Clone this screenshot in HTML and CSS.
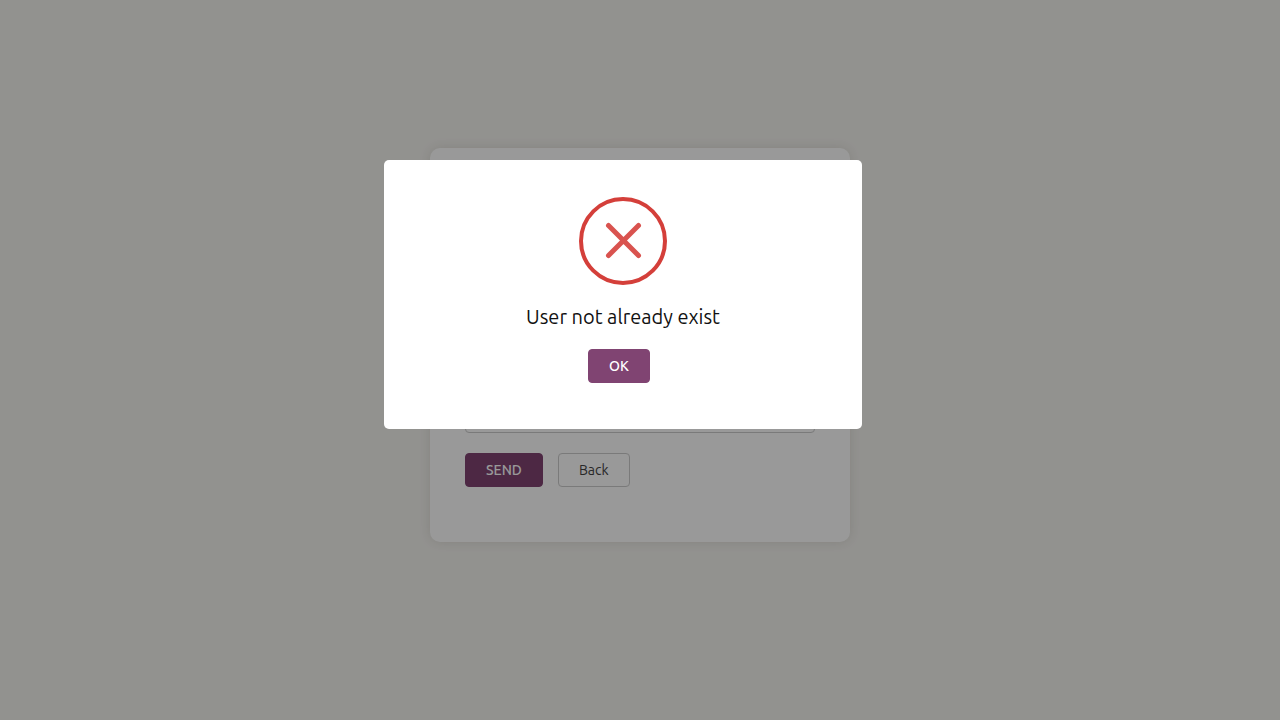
FILE: index.html
```html
<!DOCTYPE html>
<html lang="en">
<head>
<meta charset="utf-8">
<meta name="viewport" content="width=device-width, initial-scale=1">
<title>User not already exist</title>
<link rel="stylesheet" href="styles.css">
</head>
<body>
<main class="page">
  <form class="card">
    <input class="field" type="text" aria-label="User">
    <div class="actions">
      <button class="btn btn-primary" type="button">SEND</button>
      <button class="btn btn-outline" type="button">Back</button>
    </div>
  </form>
</main>
<div class="overlay">
  <div class="modal" role="alertdialog" aria-modal="true" aria-labelledby="message">
    <svg class="icon" viewBox="0 0 88 88" fill="none" aria-hidden="true">
      <circle cx="44" cy="44" r="42" stroke="#d43f3a" stroke-width="4"/>
      <path d="M29.500 28.500L59.500 58.500M59.500 28.500L29.500 58.500" stroke="#d9534f" stroke-width="5" stroke-linecap="round"/>
    </svg>
    <h1 class="message" id="message">User not already exist</h1>
    <button class="btn btn-primary btn-ok" type="button">OK</button>
  </div>
</div>
</body>
</html>
```
FILE: styles.css
```css
* {
  box-sizing: border-box;
}

body {
  margin: 0;
  background: #f4f3ef;
  color: #111;
  font-family: Ubuntu, "Noto Sans", sans-serif;
  font-size: 14px;
}

.page {
  display: flex;
  align-items: center;
  justify-content: center;
  min-height: 100vh;
  padding-bottom: 30px;
}

.card {
  display: flex;
  flex-direction: column;
  justify-content: flex-end;
  gap: 20px;
  width: 100%;
  max-width: 420px;
  min-height: 394px;
  padding: 35px 35px 55px;
  border-radius: 10px;
  background: #fff;
  box-shadow: 0 0 12px rgba(60, 50, 30, 0.12);
}

.field {
  width: 100%;
  height: 34px;
  padding: 0 12px;
  border: 1px solid #ccc;
  border-radius: 4px;
  background: #fff;
  font: inherit;
}

.actions {
  display: flex;
  gap: 15px;
}

.btn {
  height: 34px;
  padding: 0 20px;
  border: 1px solid transparent;
  border-radius: 4px;
  font: inherit;
  line-height: 20px;
}

.btn-primary {
  border-color: #804472;
  background: #804472;
  color: #fff;
  font-weight: 500;
}

.btn-outline {
  border-color: #ccc;
  background: #fff;
  color: #444;
}

.overlay {
  position: fixed;
  inset: 0;
  display: flex;
  align-items: flex-start;
  justify-content: center;
  padding: 160px 34px 0 0;
  background: rgba(0, 0, 0, 0.4);
}

.modal {
  display: flex;
  flex-direction: column;
  align-items: center;
  width: 100%;
  max-width: 478px;
  padding: 37px 20px 46px;
  border-radius: 5px;
  background: #fff;
}

.icon {
  width: 88px;
  height: 88px;
}

.message {
  margin: 18px 0;
  font-size: 20px;
  font-weight: 400;
  line-height: 28px;
}

.btn-ok {
  margin-right: 8px;
}
```
